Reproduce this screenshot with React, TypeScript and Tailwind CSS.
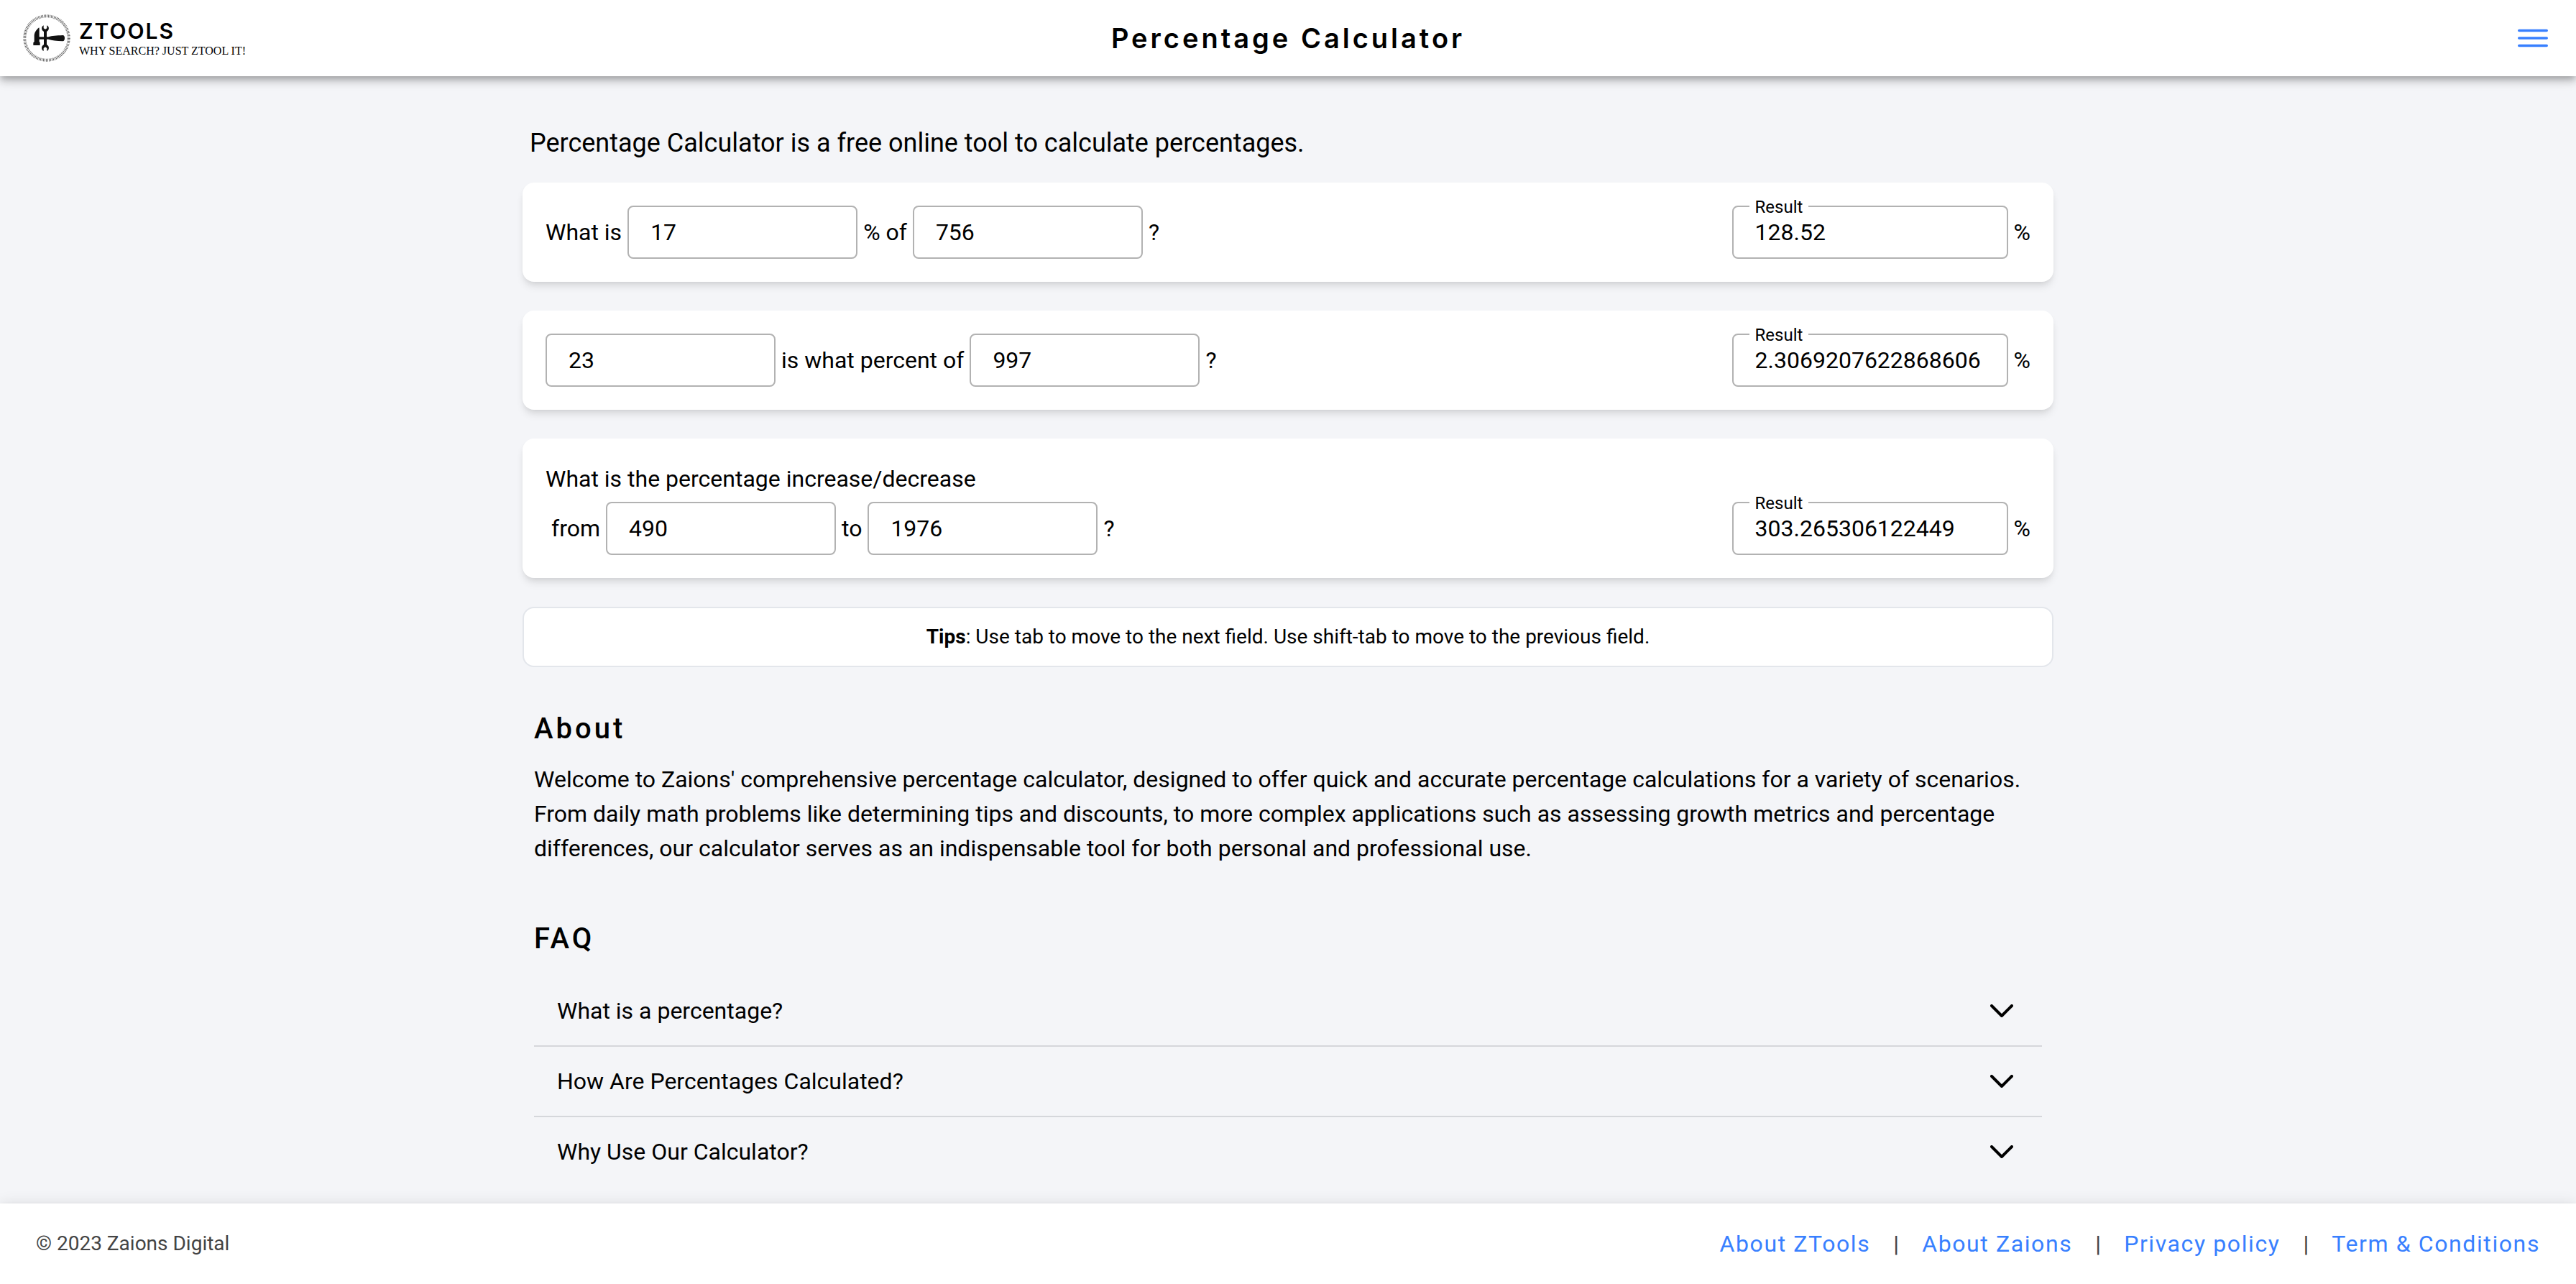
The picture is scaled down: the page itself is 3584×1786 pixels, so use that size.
import { useState, type ReactNode } from "react";

function LogoMark() {
  return (
    <svg viewBox="0 0 198 198" className="size-[66px] shrink-0" aria-hidden="true">
      <circle cx="99" cy="99" r="92" fill="none" stroke="#555" strokeWidth="12" strokeDasharray="2.6 3.42" />
      <g fill="#111">
        <path d="M67 55C54 65 46 78 47 92V114L43 118V129H71V118L68 114V60Z" />
        <path d="M66 94H112V104H66Z" />
        <path d="M107 94C120 89 140 88 166 87Q174 88 174 99Q174 111 166 112C140 111 120 109 107 104Z" />
        <path d="M86 46C76 50 75 66 87 72V126C75 132 76 148 86 153L86 141L93 136L100 141V153C110 148 111 132 99 126V72C111 66 110 50 100 46V58L93 62L86 58Z" />
      </g>
    </svg>
  );
}

function MenuIcon() {
  return (
    <svg viewBox="0 0 512 512" className="size-14" fill="none" stroke="currentColor" strokeLinecap="round" strokeWidth="32" aria-hidden="true">
      <path d="M80 160h352M80 256h352M80 352h352" />
    </svg>
  );
}

function ChevronDown() {
  return (
    <svg viewBox="0 0 32 18" className="h-[18px] w-8" fill="none" stroke="currentColor" strokeWidth="4" strokeLinecap="round" strokeLinejoin="round" aria-hidden="true">
      <path d="M2 2l14 14L30 2" />
    </svg>
  );
}

type NumberFieldProps = { label: string; value: string; onChange: (value: string) => void };

function NumberField({ label, value, onChange }: NumberFieldProps) {
  return (
    <input
      type="text"
      inputMode="decimal"
      aria-label={label}
      value={value}
      onChange={(e) => onChange(e.target.value)}
      className="h-[74px] w-80 rounded-lg border-2 border-[#b2b2b2] bg-white px-[30px] text-[32px] outline-none focus:border-[#3880ff]"
    />
  );
}

function ResultField({ id, value }: { id: string; value: string }) {
  return (
    <div className="flex items-center gap-2">
      <div className="relative">
        <label htmlFor={id} className="absolute -top-3.5 left-6 bg-white px-2 text-2xl leading-8">
          Result
        </label>
        <input
          id={id}
          type="text"
          readOnly
          value={value}
          className="h-[74px] w-96 rounded-lg border-2 border-[#b2b2b2] bg-white px-[30px] text-[32px] outline-none"
        />
      </div>
      <span>%</span>
    </div>
  );
}

function Card({ children, result }: { children: ReactNode; result: ReactNode }) {
  return (
    <section className="flex flex-wrap items-end justify-between gap-8 rounded-2xl bg-white p-8 shadow-[0_8px_12px_-2px_rgba(0,0,0,0.1),0_4px_8px_-4px_rgba(0,0,0,0.1)]">
      {children}
      {result}
    </section>
  );
}

const faqs = [
  {
    question: "What is a percentage?",
    answer: "A percentage is a number expressed as a fraction of 100.",
  },
  {
    question: "How Are Percentages Calculated?",
    answer: "Divide the part by the whole, then multiply by 100.",
  },
  {
    question: "Why Use Our Calculator?",
    answer: "It gives quick and accurate answers for everyday calculations.",
  },
];

const links = ["About ZTools", "About Zaions", "Privacy policy", "Term & Conditions"];

const show = (n: number) => (Number.isFinite(n) ? String(n) : "");

export default function App() {
  const [percent, setPercent] = useState("17");
  const [whole, setWhole] = useState("756");
  const [part, setPart] = useState("23");
  const [total, setTotal] = useState("997");
  const [from, setFrom] = useState("490");
  const [to, setTo] = useState("1976");
  const [open, setOpen] = useState<number | null>(null);

  return (
    <div className="flex min-h-screen flex-col bg-[#f4f5f8] font-[Roboto,sans-serif] text-[32px] leading-[48px] text-black">
      <header className="grid h-[106px] grid-cols-[1fr_auto_1fr] items-center bg-white px-8 shadow-[0_4px_8px_-2px_rgba(0,0,0,0.2),0_8px_10px_0_rgba(0,0,0,0.14),0_2px_20px_0_rgba(0,0,0,0.12)]">
        <a href="#home" className="flex items-center gap-3">
          <LogoMark />
          <span className="flex flex-col pt-1">
            <span className="font-[Inter,sans-serif] text-[30px] leading-8 font-semibold tracking-[2px]">ZTOOLS</span>
            <span className="font-['Liberation_Serif',serif] text-base leading-6">WHY SEARCH? JUST ZTOOL IT!</span>
          </span>
        </a>
        <h1 className="font-[Inter,sans-serif] text-[38px] font-semibold tracking-[4px]">Percentage Calculator</h1>
        <button type="button" aria-label="Open menu" className="justify-self-end text-[#3880ff]">
          <MenuIcon />
        </button>
      </header>

      <main className="mx-auto w-full max-w-[2130px] flex-1">
        <p className="mt-[66px] mb-7 px-2.5 text-4xl leading-[54px]">
          Percentage Calculator is a free online tool to calculate percentages.
        </p>

        <div className="flex flex-col gap-10">
          <Card result={<ResultField id="percent-of-result" value={show((Number(percent) * Number(whole)) / 100)} />}>
            <div className="flex items-center gap-2">
              <span>What is</span>
              <NumberField label="Percent" value={percent} onChange={setPercent} />
              <span>% of</span>
              <NumberField label="Whole number" value={whole} onChange={setWhole} />
              <span>?</span>
            </div>
          </Card>

          <Card result={<ResultField id="what-percent-result" value={show((Number(part) / Number(total)) * 100)} />}>
            <div className="flex items-center gap-2">
              <NumberField label="Part" value={part} onChange={setPart} />
              <span>is what percent of</span>
              <NumberField label="Total" value={total} onChange={setTotal} />
              <span>?</span>
            </div>
          </Card>

          <Card
            result={
              <ResultField id="change-result" value={show(((Number(to) - Number(from)) / Number(from)) * 100)} />
            }
          >
            <div className="flex flex-col gap-2">
              <p>What is the percentage increase/decrease</p>
              <div className="flex items-center gap-2 pl-2">
                <span>from</span>
                <NumberField label="From" value={from} onChange={setFrom} />
                <span>to</span>
                <NumberField label="To" value={to} onChange={setTo} />
                <span>?</span>
              </div>
            </div>
          </Card>

          <p className="rounded-2xl border-2 border-[#e3e6eb] bg-white px-8 py-4 text-center text-[28px]">
            <b className="font-bold">Tips</b>: Use tab to move to the next field. Use shift-tab to move to the previous
            field.
          </p>
        </div>

        <div className="px-4">
          <section className="mt-14">
            <h2 className="mb-4 text-[40px] leading-[60px] font-medium tracking-[4px]">About</h2>
            <p>
              Welcome to Zaions' comprehensive percentage calculator, designed to offer quick and accurate percentage
              calculations for a variety of scenarios. From daily math problems like determining tips and discounts, to
              more complex applications such as assessing growth metrics and percentage differences, our calculator
              serves as an indispensable tool for both personal and professional use.
            </p>
          </section>

          <section className="mt-[72px] mb-5">
            <h2 className="mb-[22px] text-[40px] leading-[60px] font-medium tracking-[4px]">FAQ</h2>
            <ul>
              {faqs.map((faq, i) => (
                <li key={faq.question} className="border-b-2 border-[#d5d7db] last:border-b-0">
                  <button
                    type="button"
                    aria-expanded={open === i}
                    onClick={() => setOpen(open === i ? null : i)}
                    className="flex h-24 w-full items-center justify-between pr-10 pl-8 text-left"
                  >
                    <span>{faq.question}</span>
                    <ChevronDown />
                  </button>
                  {open === i && <p className="px-8 pb-6">{faq.answer}</p>}
                </li>
              ))}
            </ul>
          </section>
        </div>
      </main>

      <footer className="flex h-28 items-center justify-between bg-white px-[50px] text-[#444] shadow-[0_4px_8px_-2px_rgba(0,0,0,0.2),0_8px_10px_0_rgba(0,0,0,0.14),0_2px_20px_0_rgba(0,0,0,0.12)]">
        <p className="text-[28px]">© 2023 Zaions Digital</p>
        <nav className="flex items-center gap-8">
          {links.map((link, i) => (
            <span key={link} className="flex items-center gap-8">
              {i > 0 && <span aria-hidden="true">|</span>}
              <a href="#top" className="tracking-wider text-[#3880ff]">
                {link}
              </a>
            </span>
          ))}
        </nav>
      </footer>
    </div>
  );
}
